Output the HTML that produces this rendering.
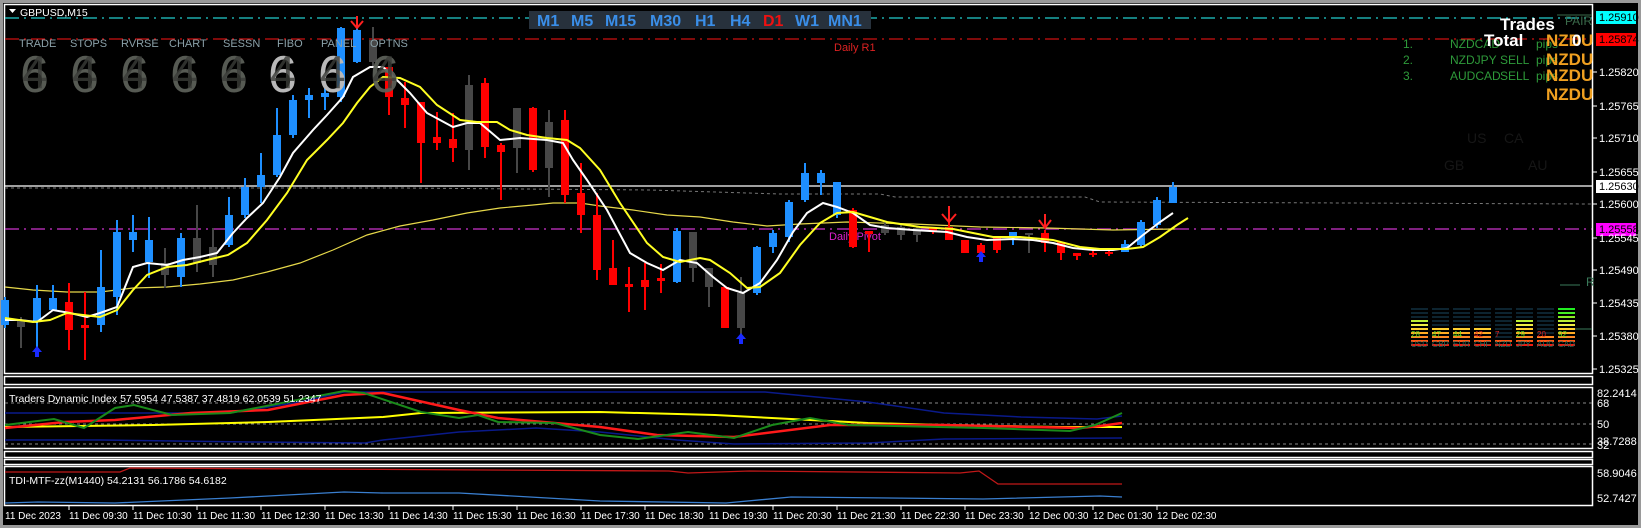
<!DOCTYPE html>
<html><head><meta charset="utf-8"><style>
html,body{margin:0;padding:0;background:#000;}
svg{display:block;}
text{font-family:"Liberation Sans",sans-serif;}
</style></head><body>
<svg width="1641" height="528" viewBox="0 0 1641 528" xmlns="http://www.w3.org/2000/svg">
<rect width="1641" height="528" fill="#000"/>
<rect x="0" y="0" width="1641" height="3" fill="#9a9a9a"/>
<rect x="0" y="0" width="3" height="528" fill="#9a9a9a"/>
<rect x="1638" y="0" width="3" height="528" fill="#9a9a9a"/>
<rect x="0" y="525" width="1641" height="3" fill="#9a9a9a"/>
<g fill="none" stroke="#fff" stroke-width="1.5">
<rect x="4.5" y="4.5" width="1588" height="369"/>
<rect x="4.5" y="376.5" width="1588" height="8"/>
<rect x="4.5" y="387.5" width="1588" height="61"/>
<rect x="4.5" y="451.5" width="1588" height="6"/>
<rect x="4.5" y="459.5" width="1588" height="5"/>
<rect x="4.5" y="466.5" width="1588" height="39"/>
</g>
<line x1="5" y1="18" x2="1592" y2="18" stroke="#22cccc" stroke-width="1.3" stroke-dasharray="14,5,2,5"/>
<line x1="5" y1="39" x2="1592" y2="39" stroke="#cc1111" stroke-width="1.3" stroke-dasharray="14,5,2,5"/>
<line x1="5" y1="229" x2="1592" y2="229" stroke="#cc33cc" stroke-width="1.3" stroke-dasharray="14,5,2,5"/>
<line x1="5" y1="186" x2="1592" y2="186" stroke="#fff" stroke-width="1.3"/>
<polyline fill="none" stroke="#777" stroke-dasharray="3,3" points="5,188 400,188 650,190 780,194 880,194 895,197 1085,197 1100,202 1592,204"/>
<text x="834" y="51" font-size="11" fill="#dd2222">Daily R1</text>
<text x="829" y="240" font-size="11" fill="#dd22cc">Daily Pivot</text>
<polyline fill="none" stroke="#e6d84a" stroke-width="1.2" points="5,287 33,290 67,292 100,292 133,288 167,287 200,284 233,280 267,272 300,263 333,250 367,235 400,226 433,220 467,213 500,208 533,205 553,203 580,203 600,206 633,210 667,215 700,217 733,222 767,226 800,224 847,222 913,224 980,227 1047,228 1113,230 1175,229"/>
<g>
<g fill="#1e8fff">
<rect x="4" y="297" width="2" height="31"/><rect x="1" y="300" width="8" height="25"/>
<rect x="36" y="285" width="2" height="68"/><rect x="33" y="298" width="8" height="24"/>
<rect x="52" y="285" width="2" height="25"/><rect x="49" y="298" width="8" height="12"/>
<rect x="100" y="250" width="2" height="82"/><rect x="97" y="287" width="8" height="38"/>
<rect x="116" y="220" width="2" height="95"/><rect x="113" y="232" width="8" height="65"/>
<rect x="132" y="215" width="2" height="37"/><rect x="129" y="232" width="8" height="8"/>
<rect x="148" y="217" width="2" height="61"/><rect x="145" y="240" width="8" height="22"/>
<rect x="180" y="233" width="2" height="54"/><rect x="177" y="238" width="8" height="39"/>
<rect x="228" y="197" width="2" height="50"/><rect x="225" y="215" width="8" height="30"/>
<rect x="244" y="178" width="2" height="40"/><rect x="241" y="187" width="8" height="28"/>
<rect x="260" y="153" width="2" height="50"/><rect x="257" y="175" width="8" height="12"/>
<rect x="276" y="108" width="2" height="69"/><rect x="273" y="135" width="8" height="40"/>
<rect x="292" y="95" width="2" height="43"/><rect x="289" y="100" width="8" height="35"/>
<rect x="308" y="88" width="2" height="30"/><rect x="305" y="95" width="8" height="5"/>
<rect x="324" y="85" width="2" height="25"/><rect x="321" y="93" width="8" height="4"/>
<rect x="340" y="27" width="2" height="75"/><rect x="337" y="28" width="8" height="69"/>
<rect x="356" y="23" width="2" height="40"/><rect x="353" y="30" width="8" height="32"/>
<rect x="676" y="228" width="2" height="55"/><rect x="673" y="231" width="8" height="51"/>
<rect x="756" y="246" width="2" height="49"/><rect x="753" y="247" width="8" height="46"/>
<rect x="772" y="230" width="2" height="23"/><rect x="769" y="233" width="8" height="14"/>
<rect x="788" y="200" width="2" height="42"/><rect x="785" y="202" width="8" height="35"/>
<rect x="804" y="163" width="2" height="39"/><rect x="801" y="173" width="8" height="27"/>
<rect x="820" y="170" width="2" height="25"/><rect x="817" y="173" width="8" height="10"/>
<rect x="836" y="182" width="2" height="36"/><rect x="833" y="182" width="8" height="33"/>
<rect x="1012" y="232" width="2" height="13"/><rect x="1009" y="232" width="8" height="5"/>
<rect x="1124" y="240" width="2" height="12"/><rect x="1121" y="244" width="8" height="8"/>
<rect x="1140" y="220" width="2" height="27"/><rect x="1137" y="222" width="8" height="23"/>
<rect x="1156" y="197" width="2" height="31"/><rect x="1153" y="200" width="8" height="25"/>
<rect x="1172" y="182" width="2" height="21"/><rect x="1169" y="187" width="8" height="16"/>
</g>
<g fill="#ff0000">
<rect x="68" y="283" width="2" height="67"/><rect x="65" y="302" width="8" height="28"/>
<rect x="84" y="292" width="2" height="68"/><rect x="81" y="325" width="8" height="3"/>
<rect x="388" y="67" width="2" height="48"/><rect x="385" y="67" width="8" height="30"/>
<rect x="404" y="82" width="2" height="46"/><rect x="401" y="98" width="8" height="7"/>
<rect x="420" y="102" width="2" height="81"/><rect x="417" y="102" width="8" height="41"/>
<rect x="436" y="112" width="2" height="38"/><rect x="433" y="137" width="8" height="6"/>
<rect x="452" y="113" width="2" height="49"/><rect x="449" y="139" width="8" height="9"/>
<rect x="484" y="78" width="2" height="80"/><rect x="481" y="83" width="8" height="64"/>
<rect x="500" y="143" width="2" height="57"/><rect x="497" y="145" width="8" height="7"/>
<rect x="532" y="107" width="2" height="65"/><rect x="529" y="108" width="8" height="62"/>
<rect x="564" y="110" width="2" height="93"/><rect x="561" y="120" width="8" height="75"/>
<rect x="580" y="163" width="2" height="70"/><rect x="577" y="193" width="8" height="22"/>
<rect x="596" y="193" width="2" height="87"/><rect x="593" y="215" width="8" height="55"/>
<rect x="612" y="240" width="2" height="45"/><rect x="609" y="268" width="8" height="17"/>
<rect x="628" y="267" width="2" height="45"/><rect x="625" y="284" width="8" height="3"/>
<rect x="644" y="263" width="2" height="47"/><rect x="641" y="280" width="8" height="7"/>
<rect x="660" y="264" width="2" height="29"/><rect x="657" y="278" width="8" height="3"/>
<rect x="724" y="287" width="2" height="41"/><rect x="721" y="287" width="8" height="41"/>
<rect x="852" y="208" width="2" height="40"/><rect x="849" y="210" width="8" height="37"/>
<rect x="868" y="231" width="2" height="21"/><rect x="865" y="231" width="8" height="3"/>
<rect x="932" y="227" width="2" height="7"/><rect x="929" y="228" width="8" height="4"/>
<rect x="948" y="215" width="2" height="25"/><rect x="945" y="227" width="8" height="13"/>
<rect x="964" y="240" width="2" height="13"/><rect x="961" y="240" width="8" height="13"/>
<rect x="980" y="243" width="2" height="12"/><rect x="977" y="245" width="8" height="8"/>
<rect x="996" y="236" width="2" height="17"/><rect x="993" y="237" width="8" height="13"/>
<rect x="1044" y="230" width="2" height="22"/><rect x="1041" y="233" width="8" height="10"/>
<rect x="1060" y="242" width="2" height="18"/><rect x="1057" y="242" width="8" height="11"/>
<rect x="1076" y="253" width="2" height="7"/><rect x="1073" y="253" width="8" height="3"/>
<rect x="1092" y="250" width="2" height="7"/><rect x="1089" y="253" width="8" height="2"/>
<rect x="1108" y="249" width="2" height="7"/><rect x="1105" y="252" width="8" height="2"/>
</g>
<g fill="#474747">
<rect x="20" y="317" width="2" height="31"/><rect x="17" y="320" width="8" height="7"/>
<rect x="164" y="248" width="2" height="40"/><rect x="161" y="263" width="8" height="12"/>
<rect x="196" y="205" width="2" height="67"/><rect x="193" y="238" width="8" height="25"/>
<rect x="212" y="228" width="2" height="49"/><rect x="209" y="247" width="8" height="18"/>
<rect x="372" y="27" width="2" height="40"/><rect x="369" y="40" width="8" height="22"/>
<rect x="468" y="75" width="2" height="95"/><rect x="465" y="85" width="8" height="65"/>
<rect x="516" y="108" width="2" height="65"/><rect x="513" y="108" width="8" height="40"/>
<rect x="548" y="110" width="2" height="87"/><rect x="545" y="122" width="8" height="46"/>
<rect x="692" y="232" width="2" height="50"/><rect x="689" y="232" width="8" height="36"/>
<rect x="708" y="268" width="2" height="39"/><rect x="705" y="268" width="8" height="19"/>
<rect x="740" y="277" width="2" height="60"/><rect x="737" y="293" width="8" height="35"/>
<rect x="884" y="222" width="2" height="13"/><rect x="881" y="225" width="8" height="8"/>
<rect x="900" y="225" width="2" height="15"/><rect x="897" y="227" width="8" height="8"/>
<rect x="916" y="227" width="2" height="15"/><rect x="913" y="228" width="8" height="7"/>
<rect x="1028" y="233" width="2" height="20"/><rect x="1025" y="233" width="8" height="2"/>
</g>
</g>
<g fill="#1a2bff">
<path d="M37 346 l-5 6 h3 v5 h4 v-5 h3 z"/>
<path d="M741 333 l-5 6 h3 v5 h4 v-5 h3 z"/>
<path d="M981 251 l-5 6 h3 v5 h4 v-5 h3 z"/>
</g>
<g fill="none" stroke="#ff2020" stroke-width="2">
<path d="M357 16 v12 M351 21 l6 7 l6 -7"/>
<path d="M949 206 v16 M942 214 l7 8 l7 -8"/>
<path d="M1045 214 v14 M1039 220 l6 8 l6 -8"/>
</g>
<polyline fill="none" stroke="#fff" stroke-width="2" points="5,320 20,320 37,322 53,310 70,313 87,317 100,313 117,307 133,267 147,263 167,265 183,260 200,257 217,253 233,233 247,218 263,203 280,177 293,153 313,130 327,115 343,97 353,77 370,67 383,67 400,83 410,93 427,113 453,127 467,123 480,123 500,140 520,138 547,140 563,143 573,160 587,180 607,210 630,253 647,263 663,270 680,260 697,263 713,277 727,288 743,293 760,283 777,260 793,232 807,213 823,203 837,207 853,213 870,225 887,228 913,230 947,232 967,237 987,240 1013,239 1033,240 1053,243 1073,248 1093,250 1113,250 1127,248 1143,235 1160,222 1173,213"/>
<polyline fill="none" stroke="#ffff22" stroke-width="2" points="5,318 33,322 50,320 67,313 83,315 100,317 117,310 133,290 147,275 167,267 187,265 207,260 228,255 247,243 267,220 287,193 307,160 327,140 343,123 357,103 370,87 383,77 400,78 420,87 437,105 460,120 477,122 497,122 510,130 527,135 547,138 567,140 580,148 600,170 620,203 647,243 663,257 680,262 700,258 710,260 730,273 747,288 760,287 780,273 800,245 820,223 837,213 853,212 870,217 887,222 920,227 953,229 973,233 993,237 1020,237 1053,240 1080,247 1100,249 1127,249 1143,247 1160,237 1177,225 1188,218"/>
<g font-family="Liberation Serif,serif" font-size="11" fill="#8aa0a8">
<text x="19" y="47">TRADE</text><text x="70" y="47">STOPS</text><text x="121" y="47">RVRSE</text><text x="169" y="47">CHART</text>
<text x="223" y="47">SESSN</text><text x="277" y="47">FIBO</text><text x="321" y="47">PANEL</text><text x="370" y="47">OPTNS</text>
</g>
<g font-family="Liberation Serif,serif" font-size="52">
<g fill="#5b5f58" opacity="0.95">
<text x="20" y="92">6</text><text x="70" y="92">6</text><text x="120" y="92">6</text><text x="170" y="92">6</text><text x="219" y="92">6</text><text x="370" y="92">6</text>
</g>
<g fill="#b8b8b8"><text x="268" y="92">6</text><text x="318" y="92">6</text></g>
<g fill="#3a3c38" font-size="46" opacity="0.8">
<text x="22" y="88">4</text><text x="72" y="88">4</text><text x="122" y="88">4</text><text x="172" y="88">4</text><text x="221" y="88">4</text><text x="270" y="88">4</text><text x="320" y="88">4</text><text x="372" y="88">4</text>
</g>
</g>
<path d="M9 9 h7 l-3.5 4 z" fill="#fff"/>
<text x="20" y="16" font-size="10.5" fill="#fff">GBPUSD,M15</text>
<rect x="529" y="11" width="342" height="18" fill="#27313c"/>
<g font-family="Liberation Mono,monospace" font-size="16" font-weight="bold" fill="#3a8ee8">
<text x="537" y="26">M1</text><text x="571" y="26">M5</text><text x="605" y="26">M15</text><text x="650" y="26">M30</text>
<text x="695" y="26">H1</text><text x="730" y="26">H4</text><text x="763" y="26" fill="#ee1111">D1</text><text x="795" y="26">W1</text><text x="828" y="26">MN1</text>
</g>
<g font-size="12" fill="#2e9a3a">
<text x="1403" y="48">1.</text><text x="1403" y="64">2.</text><text x="1403" y="80">3.</text>
<text x="1450" y="48">NZDCAD</text><text x="1450" y="64">NZDJPY</text><text x="1450" y="80">AUDCAD</text>
<text x="1500" y="64">SELL</text><text x="1500" y="80">SELL</text>
<text x="1536" y="48">pips</text><text x="1536" y="64">pips</text><text x="1536" y="80">pips</text>
<text x="1565" y="25" fill="#3a6a4a">PAIR</text>
</g>
<line x1="1557" y1="15" x2="1592" y2="15" stroke="#3a6a4a"/>
<g font-size="17" font-weight="bold">
<text x="1500" y="30" fill="#fff">Trades</text>
<text x="1484" y="46" fill="#fff">Total</text>
<text x="1546" y="46" fill="#f0a020">NZDU</text>
<text x="1546" y="65" fill="#f0a020">NZDU</text>
<text x="1546" y="81" fill="#f0a020">NZDU</text>
<text x="1546" y="100" fill="#f0a020">NZDU</text>
<text x="1572" y="46" fill="#fff">0</text>
</g>
<g font-family="Liberation Serif,serif" font-size="14" fill="#161616">
<text x="1467" y="143">US</text><text x="1504" y="143">CA</text><text x="1444" y="170">GB</text><text x="1528" y="170">AU</text>
</g>
<line x1="1560" y1="285" x2="1580" y2="285" stroke="#3a7a5a"/>
<text x="1586" y="286" font-size="12" fill="#3a7a5a">R</text>
<line x1="1560" y1="329" x2="1592" y2="329" stroke="#3a7a5a"/>
<g>
<g fill="#0d2430">
<rect x="1411" y="308" width="17" height="2"/><rect x="1411" y="312" width="17" height="2"/><rect x="1411" y="316" width="17" height="2"/>
<rect x="1432" y="308" width="17" height="2"/><rect x="1432" y="312" width="17" height="2"/><rect x="1432" y="316" width="17" height="2"/><rect x="1432" y="320" width="17" height="2"/><rect x="1432" y="324" width="17" height="2"/>
<rect x="1453" y="308" width="17" height="2"/><rect x="1453" y="312" width="17" height="2"/><rect x="1453" y="316" width="17" height="2"/><rect x="1453" y="320" width="17" height="2"/><rect x="1453" y="324" width="17" height="2"/>
<rect x="1474" y="308" width="17" height="2"/><rect x="1474" y="312" width="17" height="2"/><rect x="1474" y="316" width="17" height="2"/><rect x="1474" y="320" width="17" height="2"/><rect x="1474" y="324" width="17" height="2"/>
<rect x="1495" y="308" width="17" height="2"/><rect x="1495" y="312" width="17" height="2"/><rect x="1495" y="316" width="17" height="2"/><rect x="1495" y="320" width="17" height="2"/><rect x="1495" y="324" width="17" height="2"/><rect x="1495" y="328" width="17" height="2"/><rect x="1495" y="332" width="17" height="2"/><rect x="1495" y="336" width="17" height="2"/>
<rect x="1516" y="308" width="17" height="2"/><rect x="1516" y="312" width="17" height="2"/><rect x="1516" y="316" width="17" height="2"/>
<rect x="1537" y="308" width="17" height="2"/><rect x="1537" y="312" width="17" height="2"/><rect x="1537" y="316" width="17" height="2"/><rect x="1537" y="320" width="17" height="2"/><rect x="1537" y="324" width="17" height="2"/><rect x="1537" y="328" width="17" height="2"/><rect x="1537" y="332" width="17" height="2"/>
</g>
<rect x="1558" y="308" width="17" height="2" fill="#22ee22"/><rect x="1558" y="312" width="17" height="2" fill="#44ee22"/><rect x="1558" y="316" width="17" height="2" fill="#88ee22"/>
<g fill="#bbee33"><rect x="1411" y="320" width="17" height="2"/><rect x="1516" y="320" width="17" height="2"/><rect x="1558" y="320" width="17" height="2"/></g>
<g fill="#eeee44"><rect x="1411" y="324" width="17" height="2"/><rect x="1516" y="324" width="17" height="2"/><rect x="1558" y="324" width="17" height="2"/></g>
<g fill="#ffd030"><rect x="1411" y="328" width="17" height="2"/><rect x="1432" y="328" width="17" height="2"/><rect x="1453" y="328" width="17" height="2"/><rect x="1474" y="328" width="17" height="2"/><rect x="1516" y="328" width="17" height="2"/><rect x="1558" y="328" width="17" height="2"/></g>
<g fill="#ffaa22"><rect x="1411" y="332" width="17" height="2"/><rect x="1432" y="332" width="17" height="2"/><rect x="1453" y="332" width="17" height="2"/><rect x="1474" y="332" width="17" height="2"/><rect x="1516" y="332" width="17" height="2"/><rect x="1558" y="332" width="17" height="2"/></g>
<g fill="#ff8822"><rect x="1411" y="336" width="17" height="2"/><rect x="1432" y="336" width="17" height="2"/><rect x="1453" y="336" width="17" height="2"/><rect x="1474" y="336" width="17" height="2"/><rect x="1516" y="336" width="17" height="2"/><rect x="1537" y="336" width="17" height="2"/><rect x="1558" y="336" width="17" height="2"/></g>
<g fill="#ff5511"><rect x="1411" y="340" width="17" height="2"/><rect x="1432" y="340" width="17" height="2"/><rect x="1453" y="340" width="17" height="2"/><rect x="1474" y="340" width="17" height="2"/><rect x="1495" y="340" width="17" height="2"/><rect x="1516" y="340" width="17" height="2"/><rect x="1537" y="340" width="17" height="2"/><rect x="1558" y="340" width="17" height="2"/></g>
<g fill="#ee1a11"><rect x="1411" y="344" width="17" height="2"/><rect x="1432" y="344" width="17" height="2"/><rect x="1453" y="344" width="17" height="2"/><rect x="1474" y="344" width="17" height="2"/><rect x="1495" y="344" width="17" height="2"/><rect x="1516" y="344" width="17" height="2"/><rect x="1537" y="344" width="17" height="2"/><rect x="1558" y="344" width="17" height="2"/></g>
<g font-size="8"><text x="1411" y="337" fill="#66dd22">28</text><text x="1432" y="337" fill="#66dd22">47</text><text x="1453" y="337" fill="#66dd22">44</text><text x="1474" y="337" fill="#dd2222">42</text><text x="1495" y="337" fill="#dd2222">7</text><text x="1516" y="337" fill="#66dd22">29</text><text x="1537" y="337" fill="#dd2222">20</text><text x="1558" y="337" fill="#66dd22">92</text></g>
<g font-size="8" fill="#2a6a5a"><text x="1411" y="347">USD</text><text x="1432" y="347">GBP</text><text x="1453" y="347">EUR</text><text x="1474" y="347">CHF</text><text x="1495" y="347">NZD</text><text x="1516" y="347">JPY</text><text x="1537" y="347">AUD</text><text x="1558" y="347">CAD</text></g>
</g>
<g stroke="#fff"><line x1="1593" y1="72" x2="1597" y2="72"/><line x1="1593" y1="106" x2="1597" y2="106"/><line x1="1593" y1="138" x2="1597" y2="138"/><line x1="1593" y1="172" x2="1597" y2="172"/><line x1="1593" y1="204" x2="1597" y2="204"/><line x1="1593" y1="238" x2="1597" y2="238"/><line x1="1593" y1="270" x2="1597" y2="270"/><line x1="1593" y1="303" x2="1597" y2="303"/><line x1="1593" y1="336" x2="1597" y2="336"/><line x1="1593" y1="369" x2="1597" y2="369"/></g>
<rect x="1596" y="11" width="40" height="13" fill="#00ffff"/>
<rect x="1596" y="33" width="40" height="13" fill="#ff0000"/>
<rect x="1596" y="180" width="40" height="13" fill="#fff"/>
<rect x="1596" y="223" width="40" height="13" fill="#ff00ff"/>
<g font-size="11" fill="#fff">
<text x="1599" y="21" fill="#000">1.25910</text>
<text x="1599" y="43" fill="#000">1.25874</text>
<text x="1599" y="76">1.25820</text><text x="1599" y="110">1.25765</text><text x="1599" y="142">1.25710</text><text x="1599" y="176">1.25655</text>
<text x="1599" y="190" fill="#000">1.25630</text>
<text x="1599" y="208">1.25600</text>
<text x="1599" y="233" fill="#000">1.25558</text>
<text x="1599" y="242">1.25545</text>
<text x="1599" y="274">1.25490</text><text x="1599" y="307">1.25435</text><text x="1599" y="340">1.25380</text><text x="1599" y="373">1.25325</text>
<text x="1597" y="397">82.2414</text><text x="1597" y="407">68</text><text x="1597" y="428">50</text><text x="1597" y="445">38.7288</text><text x="1597" y="449">32</text>
<text x="1597" y="477">58.9046</text><text x="1597" y="502">52.7427</text>
</g>
<g stroke="#888" stroke-dasharray="3,3"><line x1="5" y1="403" x2="1592" y2="403"/><line x1="5" y1="424" x2="1592" y2="424"/><line x1="5" y1="444" x2="1592" y2="444"/></g>
<polyline fill="none" stroke="#0a1a8a" stroke-width="1.5" points="5,413 230,413 300,402 344,392 600,392 765,392 868,402 944,413 1021,417 1097,419 1122,416"/>
<polyline fill="none" stroke="#0a1a8a" stroke-width="1.5" points="5,440 100,440 250,442 365,443 383,440 459,432 536,428 600,432 677,440 734,444 868,443 944,439 1122,438"/>
<polyline fill="none" stroke="#ffff00" stroke-width="2" points="5,427 153,425 268,422 383,417 421,413 600,412 715,415 791,419 868,423 944,425 1059,427 1122,427"/>
<polyline fill="none" stroke="#ff1a1a" stroke-width="2.5" points="5,428 65,422 115,420 191,413 268,410 344,395 383,393 459,410 498,418 600,427 657,435 734,437 830,425 944,425 1080,428 1100,426 1122,423"/>
<polyline fill="none" stroke="#1a8a1a" stroke-width="2" points="5,425 54,419 84,428 115,408 134,405 172,415 230,413 287,402 344,391 364,393 421,412 459,418 478,415 498,422 555,423 600,435 638,439 688,432 734,438 772,425 810,418 849,425 983,428 1070,431 1095,425 1122,413"/>
<text x="9" y="402" font-size="10.5" fill="#fff">Traders Dynamic Index 57.5954 47.5387 37.4819 62.0539 51.2347</text>
<polyline fill="none" stroke="#c01818" stroke-width="1.3" points="5,472 120,472 130,468 669,471 688,473 749,471 960,473 979,471 998,484 1122,484"/>
<polyline fill="none" stroke="#3a7fd0" stroke-width="1.3" points="5,503 38,502 115,503 230,498 344,492 383,493 459,493 600,501 726,503 791,497 983,499 1100,496 1122,497"/>
<text x="9" y="484" font-size="10.5" fill="#fff">TDI-MTF-zz(M1440) 54.2131 56.1786 54.6182</text>
<g stroke="#fff"><line x1="69" y1="506" x2="69" y2="510"/><line x1="133" y1="506" x2="133" y2="510"/><line x1="197" y1="506" x2="197" y2="510"/><line x1="261" y1="506" x2="261" y2="510"/><line x1="325" y1="506" x2="325" y2="510"/><line x1="389" y1="506" x2="389" y2="510"/><line x1="453" y1="506" x2="453" y2="510"/><line x1="517" y1="506" x2="517" y2="510"/><line x1="581" y1="506" x2="581" y2="510"/><line x1="645" y1="506" x2="645" y2="510"/><line x1="709" y1="506" x2="709" y2="510"/><line x1="773" y1="506" x2="773" y2="510"/><line x1="837" y1="506" x2="837" y2="510"/><line x1="901" y1="506" x2="901" y2="510"/><line x1="965" y1="506" x2="965" y2="510"/><line x1="1029" y1="506" x2="1029" y2="510"/><line x1="1093" y1="506" x2="1093" y2="510"/><line x1="1157" y1="506" x2="1157" y2="510"/></g>
<g font-size="10" fill="#fff">
<text x="5" y="519">11 Dec 2023</text><text x="69" y="519">11 Dec 09:30</text><text x="133" y="519">11 Dec 10:30</text><text x="197" y="519">11 Dec 11:30</text><text x="261" y="519">11 Dec 12:30</text><text x="325" y="519">11 Dec 13:30</text><text x="389" y="519">11 Dec 14:30</text><text x="453" y="519">11 Dec 15:30</text><text x="517" y="519">11 Dec 16:30</text><text x="581" y="519">11 Dec 17:30</text><text x="645" y="519">11 Dec 18:30</text><text x="709" y="519">11 Dec 19:30</text><text x="773" y="519">11 Dec 20:30</text><text x="837" y="519">11 Dec 21:30</text><text x="901" y="519">11 Dec 22:30</text><text x="965" y="519">11 Dec 23:30</text><text x="1029" y="519">12 Dec 00:30</text><text x="1093" y="519">12 Dec 01:30</text><text x="1157" y="519">12 Dec 02:30</text>
</g>
</svg>
</body></html>
